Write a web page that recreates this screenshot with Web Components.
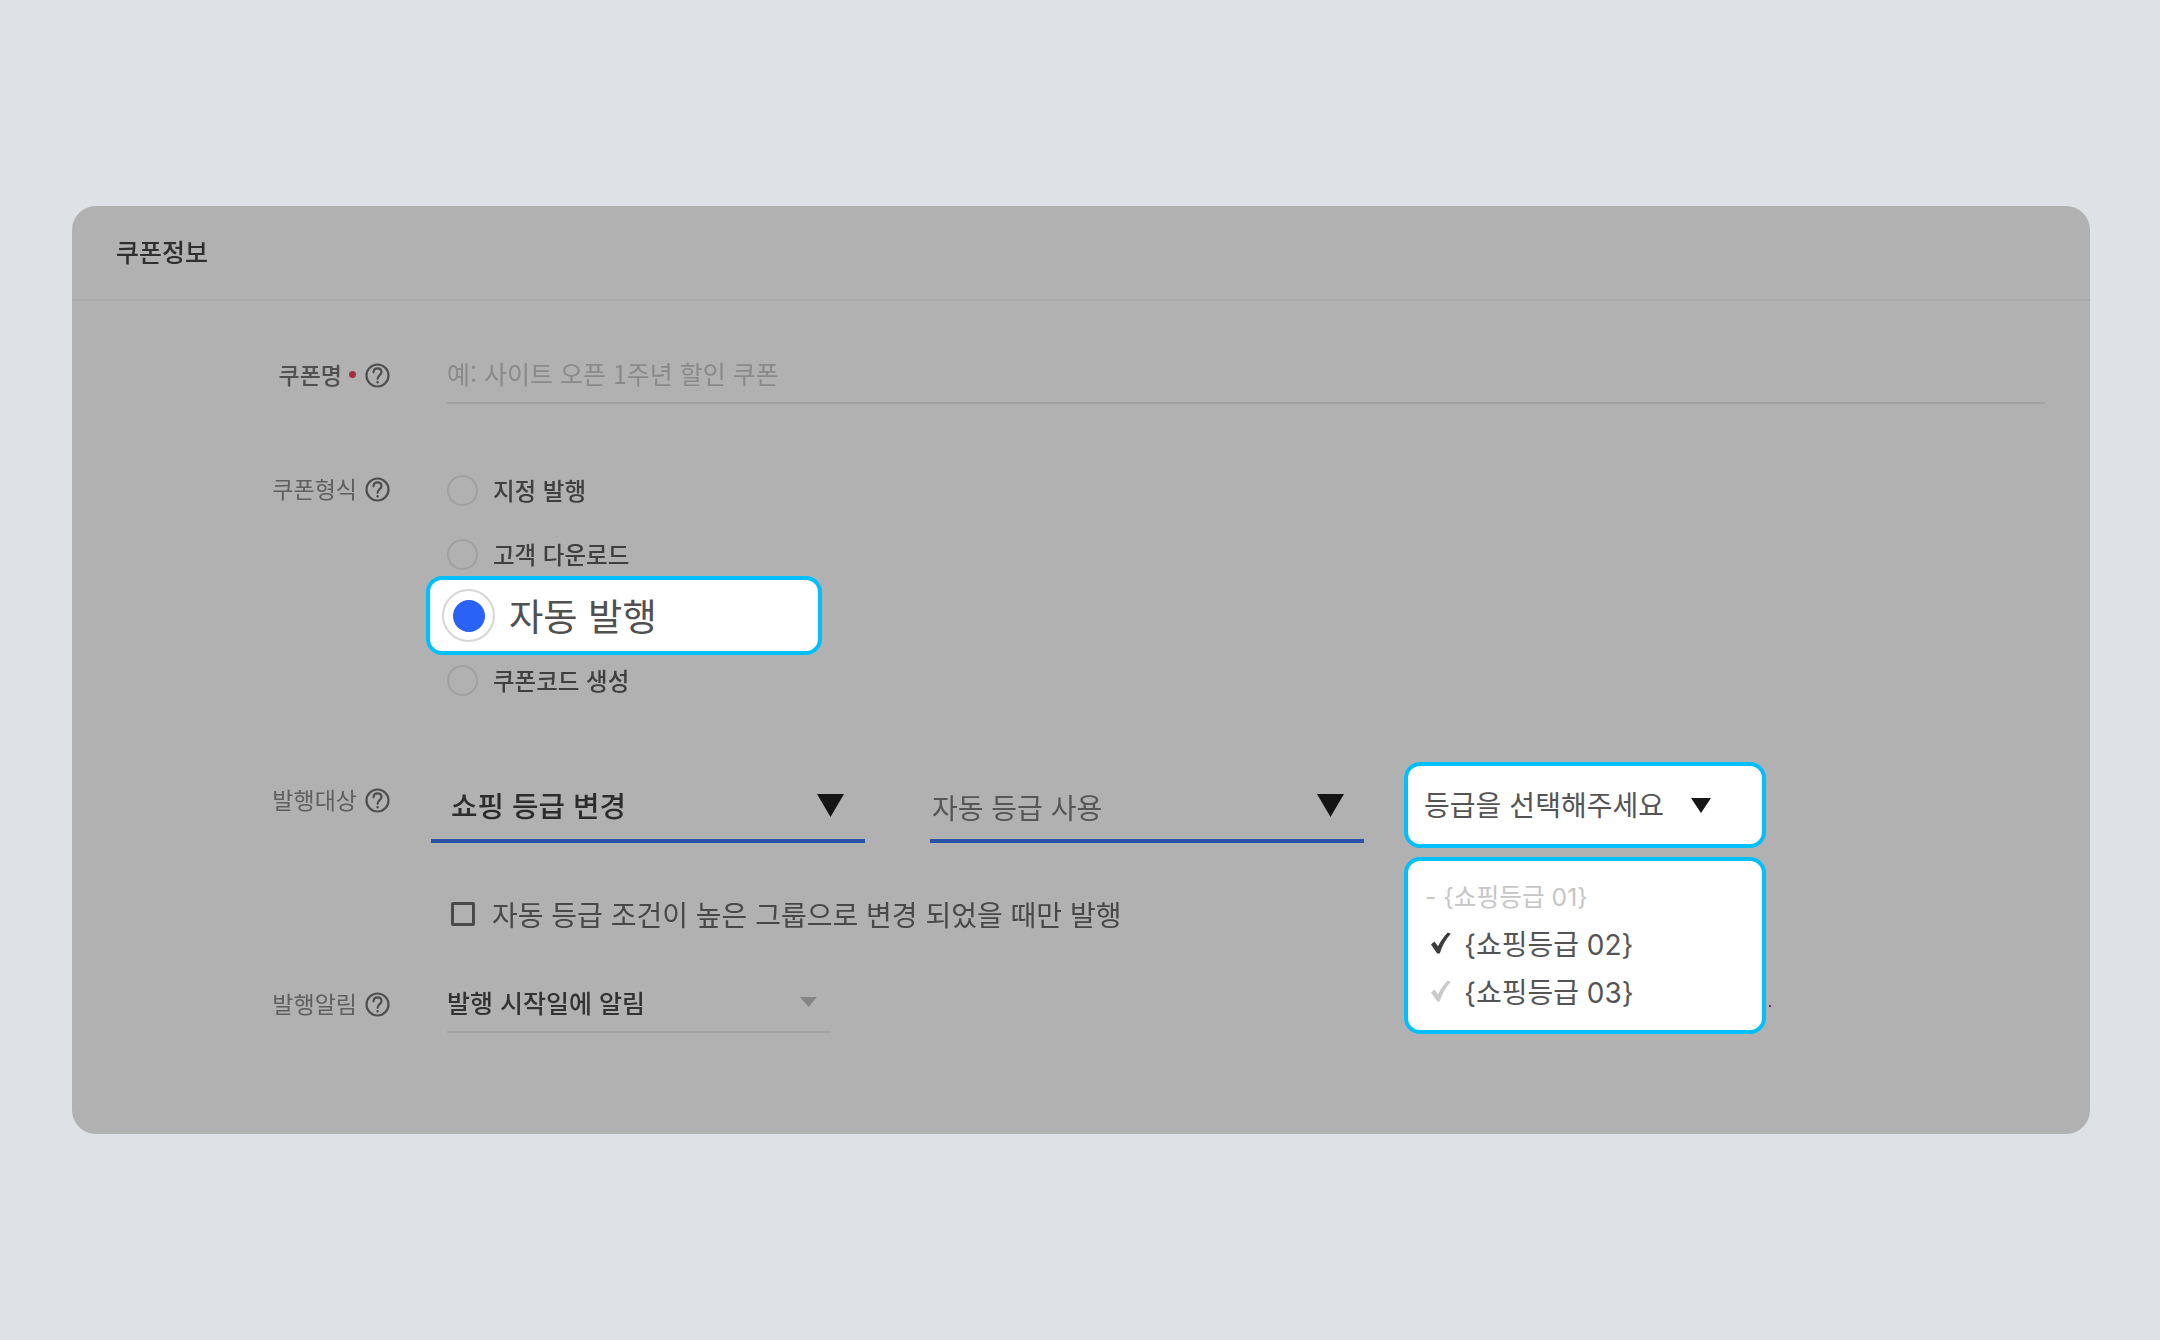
<!DOCTYPE html>
<html lang="ko"><head><meta charset="utf-8"><title>쿠폰정보</title>
<style>
html,body{margin:0;padding:0;background:#dee1e6;}
body{width:2160px;height:1340px;overflow:hidden;font-family:"Noto Sans CJK KR","Noto Sans",sans-serif;}
</style></head>
<body>
<coupon-page>
  <coupon-card heading="쿠폰정보">
    <form-row label="쿠폰명" required top="0">
      <text-input placeholder="예: 사이트 오픈 1주년 할인 쿠폰"></text-input>
    </form-row>
    <form-row label="쿠폰형식" style="margin-top:62px">
      <radio-list>
        <radio-option style="margin-bottom:20px">지정 발행</radio-option>
        <radio-option>고객 다운로드</radio-option>
        <radio-highlight>자동 발행</radio-highlight>
        <radio-option style="margin-top:3px">쿠폰코드 생성</radio-option>
      </radio-list>
    </form-row>
    <form-row label="발행대상" label-offset="15" style="margin-top:60px">
      <target-group>
        <under-select strong style="width:434px;margin-left:-16px;--pl:20px;--pr:21px">쇼핑 등급 변경</under-select>
        <under-select style="width:434px;margin-left:65px;--pl:2px;--pr:20px;--shift:2px">자동 등급 사용</under-select>
        <grade-menu></grade-menu>
      </target-group>
      <check-line style="margin-top:48px">자동 등급 조건이 높은 그룹으로 변경 되었을 때만 발행</check-line>
    </form-row>
    <form-row label="발행알림" label-offset="1" style="margin-top:43px">
      <plain-select>발행 시작일에 알림</plain-select>
    </form-row>
  </coupon-card>
</coupon-page>
<script>
const def=(name,html)=>customElements.define(name,class extends HTMLElement{
  connectedCallback(){ if(this.shadowRoot) return; const r=this.attachShadow({mode:'open'}); r.innerHTML=typeof html==='function'?html(this):html; }
});
const FONT='"Noto Sans CJK KR","Noto Sans",sans-serif';
const TRI=(w,h,c)=>`<svg width="${w}" height="${h}" viewBox="0 0 ${w} ${h}" style="display:block;flex:none"><path d="M0 0H${w}L${w/2} ${h}Z" fill="${c}"/></svg>`;
const CHECK=c=>`<svg width="20" height="22" viewBox="0 0 20 22" style="display:block;flex:none"><path d="M0 12.500L3.400 9.600L7 14.200C9.600 9 12.800 4.500 16.800 0.500L19.800 1.800C14.800 7.400 11.200 13.600 8.800 21.500H6.200Z" fill="${c}"/></svg>`;

def('coupon-page',`<style>:host{display:block;box-sizing:border-box;width:2160px;height:1340px;padding:206px 70px 0 72px}</style><slot></slot>`);

def('coupon-card',h=>`<style>
:host{display:block;background:#b1b1b1;border-radius:24px;height:928px;overflow:hidden;font-family:${FONT}}
header{box-sizing:border-box;height:95px;padding:0 44px;border-bottom:2px solid #a9a9a9;display:flex;align-items:center;font-size:25px;font-weight:500;color:#2f2f2f}
header span{filter:blur(.6px);position:relative;top:-2px}
main{padding:51px 45px 0 0}
</style><header><span>${h.getAttribute('heading')}</span></header><main><slot></slot></main>`);

def('help-icon',`<style>:host{display:block;width:25px;height:25px;flex:none;filter:blur(.4px);margin-bottom:2px}</style>
<svg width="25" height="25" viewBox="0 0 25 25" fill="none" stroke="#4e4e4e" stroke-width="2.200"><circle cx="12.500" cy="12.500" r="11"/><path d="M8.500 9.300C8.600 6.900 10.300 5.400 12.500 5.400C14.800 5.400 16.500 6.900 16.500 9C16.500 12 12.600 12.400 12.600 15.800" stroke-linecap="round"/><circle cx="12.600" cy="19.300" r=".7" fill="#4e4e4e" stroke-width="1.200"/></svg>`);

def('form-row',h=>{
  const off=h.getAttribute('label-offset')||0, req=h.hasAttribute('required');
  return `<style>
  :host{display:grid;grid-template-columns:318px 1fr;column-gap:57px;align-items:start}
  .l{display:flex;justify-content:flex-end;align-items:center;height:44px;margin-top:${off}px;font-size:23px;font-weight:${req?500:400};color:${req?'#505050':'#5f5f5f'}}
  .t{filter:blur(.6px);margin-right:${req?0:8}px}
  .d{width:7px;height:7px;border-radius:50%;background:#a3313f;margin:0 9px 0 7px;filter:blur(.4px)}
  </style><div class="l"><span class="t">${h.getAttribute('label')}</span>${req?'<i class="d"></i>':''}<help-icon></help-icon></div><div><slot></slot></div>`;
});

def('text-input',h=>`<style>
:host{display:block;height:50px;border-bottom:2px solid #a2a2a2;font-size:25px;line-height:43px;color:#8a8a8a}
span{filter:blur(.6px);display:inline-block}
</style><span>${h.getAttribute('placeholder')}</span>`);

def('radio-list',`<style>:host{display:flex;flex-direction:column;padding-top:2px}</style><slot></slot>`);

def('radio-option',`<style>
:host{display:flex;align-items:center;height:44px;font-size:23.500px;font-weight:500;color:#3f3f3f}
i{box-sizing:border-box;width:31px;height:31px;border-radius:50%;border:2px solid #a0a0a0;margin-right:15px;flex:none;filter:blur(.4px)}
span{filter:blur(.6px);position:relative;top:-.5px}
</style><i></i><span><slot></slot></span>`);

def('radio-highlight',`<style>
:host{box-sizing:border-box;display:flex;align-items:center;width:396px;height:79px;margin-left:-21px;padding-left:12px;background:#fff;border:4px solid #00bfff;border-radius:16px;font-size:37.300px;color:#505050}
.o{box-sizing:border-box;width:53px;height:53px;border-radius:50%;border:2px solid #d6d6d6;display:flex;align-items:center;justify-content:center;margin-right:14px;flex:none}
.o i{width:32px;height:32px;border-radius:50%;background:#2962f6}
span{position:relative;top:-1px}
</style><div class="o"><i></i></div><span><slot></slot></span>`);

def('target-group',`<style>:host{display:flex;position:relative;align-items:flex-start;height:81px}</style><slot></slot>`);

def('under-select',h=>{const s=h.hasAttribute('strong');return `<style>
:host{box-sizing:border-box;display:flex;justify-content:space-between;align-items:flex-start;height:81px;padding:20px var(--pr) 0 var(--pl);border-bottom:4px solid #2b51a8;font-size:${s?28.800:28}px;line-height:46px;font-weight:${s?500:400};color:${s?'#2c2c2c':'#565656'};flex:none}
span{filter:blur(.45px);position:relative;top:var(--shift,0px)}
div{margin-top:12px;filter:blur(.35px)}
</style><span><slot></slot></span><div>${TRI(27,23,'#141414')}</div>`});

def('check-line',`<style>
:host{display:flex;align-items:center;height:46px;font-size:28px;color:#484848;padding-left:4px}
i{box-sizing:border-box;width:24px;height:24px;border:3px solid #4a4a4a;border-radius:2px;margin-right:17px;flex:none;filter:blur(.4px)}
span{filter:blur(.45px)}
</style><i></i><span><slot></slot></span>`);

def('plain-select',`<style>
:host{box-sizing:border-box;display:flex;justify-content:space-between;align-items:center;width:384px;height:53px;padding:0 14px 7px 0;border-bottom:2px solid #a4a4a4;font-size:25px;font-weight:500;color:#333;line-height:46px}
span{filter:blur(.6px)}
</style><span><slot></slot></span>${TRI(17,10,'#858585')}`);

def('grade-menu',`<style>
:host{position:absolute;left:957px;top:0;width:362px;display:flex;flex-direction:column;gap:9px;font-size:28px;color:#545454}
.b{box-sizing:border-box;background:#fff;border:4px solid #00bfff;border-radius:16px}
.top{height:86px;display:flex;align-items:center;padding-left:16px}
.top span{width:267px;flex:none;position:relative;top:-1px;letter-spacing:.05px}
.list{height:177px;padding:11px 0 0 17px}
.it{display:flex;align-items:center;height:48px;font-size:28px;font-family:Inter,"Noto Sans CJK KR",sans-serif}
.it svg{margin:0 13px 0 6px}
.off{font-size:24.700px;height:46px;color:#c6c6c6;margin-bottom:1px}
.dot{position:absolute;left:365px;top:243px;width:2px;height:2px;background:#7a1f7a}
</style>
<div class="b top"><span>등급을 선택해주세요</span>${TRI(20,15,'#161616')}</div>
<div class="b list">
  <div class="it off">- {쇼핑등급 01}</div>
  <div class="it">${CHECK('#3c3c3c')}<span>{쇼핑등급 02}</span></div>
  <div class="it">${CHECK('#cbcbcb')}<span>{쇼핑등급 03}</span></div>
</div><i class="dot"></i>`);
</script>
</body></html>
